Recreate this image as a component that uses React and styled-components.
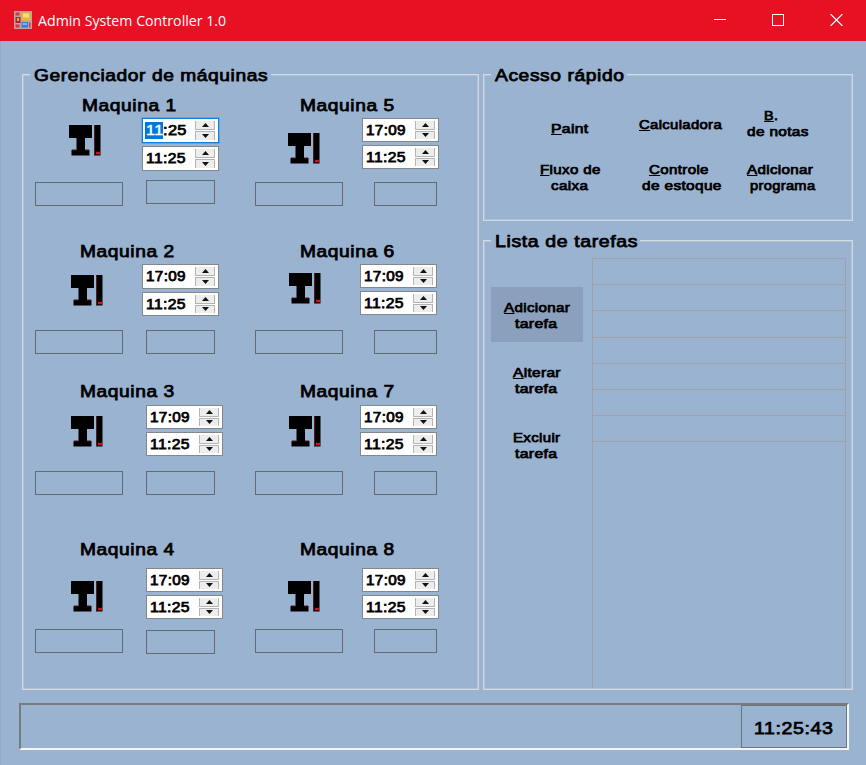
import React, { useLayoutEffect, useRef, useState } from "react";
import styled, { createGlobalStyle, css } from "styled-components";

const BG = "#99b3d1";

const GlobalStyle = createGlobalStyle`
  *, *::before, *::after { box-sizing: border-box; }
  html, body { margin: 0; padding: 0; background: ${BG}; overflow: hidden; }
`;

/* ---------- text stretched to a fixed width ---------- */

const FitBox = styled.span`
  display: block;
  flex: none;
  width: ${(p) => p.$width}px;
  height: ${(p) => p.$line}px;
  line-height: ${(p) => p.$line}px;
  font-size: ${(p) => p.$size}px;
  letter-spacing: ${(p) => p.$track}px;
  margin-left: ${(p) => p.$shift || 0}px;
  white-space: pre;
`;

const FitText = styled.span`
  display: inline-block;
  vertical-align: top;
  transform-origin: 0 50%;
`;

function Fit({ width, size, line, shift, track = 0.5, children }) {
  const ref = useRef(null);
  const [scale, setScale] = useState(1);
  useLayoutEffect(() => {
    setScale(width / (ref.current.offsetWidth - track));
  }, [width, track, children]);
  return (
    <FitBox $width={width} $size={size} $line={line} $shift={shift} $track={track}>
      <FitText ref={ref} style={{ transform: `scaleX(${scale})` }}>
        {children}
      </FitText>
    </FitBox>
  );
}

const Mnemonic = styled.span`
  text-decoration: underline;
  text-decoration-thickness: 1px;
  text-underline-offset: 1px;
  text-decoration-skip-ink: none;
`;

/* ---------- window ---------- */

const Window = styled.div`
  width: 866px;
  height: 765px;
  display: flex;
  flex-direction: column;
  background: ${BG};
  color: #000;
  font-family: "Liberation Sans", Arial, sans-serif;
  -webkit-text-stroke: 0.75px currentColor;
`;

const TitleBar = styled.header`
  height: 41px;
  flex: none;
  display: flex;
  align-items: center;
  padding: 0 0 1px 14px;
  background: #e81123;
  color: #fff;
  font-family: "Open Sans", "Noto Sans", sans-serif;
  -webkit-text-stroke: 0;
`;

const TitleText = styled.div`
  margin-left: 6px;
  flex: 1;
`;

const WindowButtons = styled.div`
  display: flex;
  align-items: center;
  gap: 46px;
  padding-right: 23px;
`;

const Body = styled.main`
  flex: 1;
  display: flex;
  flex-direction: column;
  padding: 33px 13px 0 21px;
  border-left: 1px solid #93abc4;
`;

const Panels = styled.div`
  display: flex;
  gap: 4px;
`;

const SideColumn = styled.div`
  display: flex;
  flex-direction: column;
  gap: 19px;
`;

const GroupBox = styled.section`
  width: ${(p) => p.$width}px;
  height: ${(p) => p.$height}px;
  border: 1px solid #d3dae2;
  outline: 1px solid rgba(205, 214, 224, 0.4);
  outline-offset: -2px;
`;

const Legend = styled.h2`
  position: relative;
  width: max-content;
  margin: -8px 0 0 7px;
  padding: 0 3px 0 4px;
  background: ${BG};
  font-weight: 400;
`;

/* ---------- machines ---------- */

const MachineGrid = styled.div`
  display: grid;
  grid-template-columns: 220px 212px;
  grid-template-rows: 146px 140px 158px 120px;
  margin: 12px 0 0 12px;
`;

const Machine = styled.article`
  display: flex;
  flex-direction: column;
`;

const MachineBody = styled.div`
  display: flex;
  align-items: flex-start;
  height: ${(p) => p.$height}px;
  margin-top: -1px;
`;

const IconSlot = styled.div`
  flex: none;
  width: ${(p) => p.$width}px;
  padding: ${(p) => p.$top}px 0 0 ${(p) => p.$left}px;
`;

const Spinners = styled.div`
  display: flex;
  flex-direction: column;
  gap: 3px;
  padding-top: ${(p) => p.$top}px;
`;

const SpinnerBox = styled.div`
  width: 77px;
  height: ${(p) => (p.$tall ? 25 : 24)}px;
  display: flex;
  justify-content: space-between;
  align-items: stretch;
  padding: 2px 3px 2px 3px;
  background: #fff;
  border: 1px solid #848789;
  ${(p) =>
    p.$active &&
    css`
      border-color: #0f7fdc;
      box-shadow: 0 0 0 0.5px #3d94dd;
    `}
`;

const TimeText = styled.div`
  display: flex;
  align-items: center;
`;

const Selected = styled.span`
  display: block;
  height: 17px;
  margin-left: -1px;
  padding-left: 1px;
  background: #0078d7;
  color: #fff;
  -webkit-text-stroke-width: 0.4px;
`;

const Arrows = styled.div`
  width: 20px;
  display: grid;
  grid-template-rows: 1fr 1fr;
  gap: 1px;
`;

const ArrowButton = styled.div`
  display: flex;
  align-items: center;
  justify-content: center;
  background: #ededed;
  border: solid #b4b4b4;
  border-width: ${(p) => (p.$down ? "1px 1px 0" : "0 1px 1px")};
`;

const StatusRow = styled.div`
  display: flex;
  align-items: flex-start;
`;

const StatusBox = styled.div`
  flex: none;
  width: ${(p) => p.$width}px;
  height: 24px;
  margin: ${(p) => p.$top || 0}px 0 0 ${(p) => p.$left || 0}px;
  border: 1px solid #626a74;
`;

/* ---------- quick access ---------- */

const QuickGrid = styled.div`
  display: grid;
  grid-template-columns: 100px 103px 90px;
  grid-template-rows: 54px 40px;
  margin: 23px 0 0 50px;
`;

const TextButton = styled.button`
  appearance: none;
  border: 0;
  padding: 0;
  background: none;
  color: inherit;
  font: inherit;
  text-align: left;
  display: flex;
  flex-direction: column;
  align-items: flex-start;
  margin: ${(p) => p.$top || 0}px 0 0 ${(p) => p.$left || 0}px;
`;

/* ---------- tasks ---------- */

const TaskArea = styled.div`
  display: flex;
  margin-top: 7px;
`;

const TaskActions = styled.div`
  width: 108px;
  padding: 29px 0 0 7px;
  display: flex;
  flex-direction: column;
  gap: 10px;
`;

const TaskButton = styled(TextButton)`
  width: 92px;
  height: 55px;
  padding: 13px 0 0 13px;
  background: ${(p) => (p.$active ? "#8ba0bd" : "transparent")};
`;

const TaskList = styled.div`
  width: 254px;
  height: 430px;
  border: solid #a0a1a4;
  border-width: 1px 1px 0;
`;

const TaskRow = styled.div`
  height: 26.2px;
  border-bottom: 1px solid #a0a1a4;
`;

/* ---------- status bar ---------- */

const StatusBar = styled.footer`
  display: flex;
  justify-content: flex-end;
  width: 830px;
  height: 47px;
  margin: 13px 0 0 -3px;
  border-style: solid;
  border-width: 2px;
  border-color: #777b80 #f4f7fa #f4f7fa #777b80;
`;

const Clock = styled.div`
  width: 106px;
  height: 43px;
  padding: 13px 0 0 12px;
  border: 1px solid #6d747d;
`;

/* ---------- drawings ---------- */

const AppIcon = () => (
  <svg width="18" height="18" viewBox="0 0 18 18">
    <rect width="18" height="18" fill="#b9a3a5" />
    <rect x="1.5" y="1.5" width="4" height="3" fill="#e03242" />
    <rect x="1.5" y="6" width="5" height="6" fill="#a82a20" />
    <rect x="3" y="7" width="2" height="3" fill="#e4a28e" />
    <rect x="1.5" y="13.5" width="4" height="3" fill="#e03242" />
    <rect x="7.5" y="1.5" width="9" height="8" fill="#e9b52c" />
    <rect x="9" y="2.5" width="6" height="4" fill="#f9dc75" />
    <rect x="7.5" y="11" width="6.5" height="5.5" fill="#397bdc" />
    <rect x="8.5" y="12" width="4.5" height="2" fill="#82b2f2" />
    <rect x="15" y="11.5" width="1.5" height="5" fill="#e03242" />
  </svg>
);

const MachineIcon = () => (
  <svg width="32" height="31" viewBox="0 0 32 31" display="block">
    <path d="M0 0H23V13H16V25H20.5V30.5H2.5V25H7.5V13H0Z" fill="#000" />
    <path d="M3 25H7.5M16 25H20" stroke="#5a1118" strokeWidth="1" />
    <rect x="25" y="0" width="6.5" height="30.5" fill="#000" />
    <path d="M25.5 0V30" stroke="#571820" strokeWidth="1" />
    <path d="M27 26.2l1 .8h2l1-.8v3h-4z" fill="#d3101c" />
  </svg>
);

const Triangle = ({ down }) => (
  <svg width="7" height="4" viewBox="0 0 7 4" display="block">
    <path d={down ? "M0 0H7L3.5 4Z" : "M0 4H7L3.5 0Z"} fill="#111" />
  </svg>
);

/* ---------- data ---------- */

const machines = [
  { id: 1, title: 48, icon: [34, 11], spin: [107, 4], body: 68, box: [23, 69, -2], first: "11:25", active: true, tall: true, tall2: true },
  { id: 5, title: 46, icon: [33, 19], spin: [107, 4], body: 68, box: [31, 63, 0] },
  { id: 2, title: 46, icon: [36, 15], spin: [107, 4], body: 70, box: [23, 69, 0], tall: true },
  { id: 6, title: 46, icon: [34, 13], spin: [105, 4], body: 70, box: [31, 63, 0] },
  { id: 3, title: 46, icon: [36, 16], spin: [111, 5], body: 71, box: [23, 69, 0] },
  { id: 7, title: 46, icon: [34, 16], spin: [105, 5], body: 71, box: [31, 63, 0] },
  { id: 4, title: 46, icon: [36, 23], spin: [111, 10], body: 71, box: [23, 69, 1] },
  { id: 8, title: 46, icon: [33, 23], spin: [107, 10], body: 71, box: [31, 63, 0] },
];

const quick = [
  { at: [17, 13], lines: [["P", "aint", 37, 0]] },
  { at: [5, 9], lines: [["C", "alculadora", 83, 0]] },
  { at: [10, 0], lines: [["B", ".", 14, 17], ["", "de notas", 61, 0]] },
  { at: [6, 0], lines: [["F", "luxo de", 60, 0], ["", "caixa", 37, 11]] },
  { at: [7, 0], lines: [["C", "ontrole", 60, 8], ["", "de estoque", 79, 1]] },
  { at: [10, 0], lines: [["A", "dicionar", 66, 0], ["", "programa", 65, 3]] },
];

const tasks = [
  { active: true, lines: [["A", "dicionar", 66, 0], ["", "tarefa", 42, 11]] },
  { lines: [["A", "lterar", 47, 9], ["", "tarefa", 42, 11]] },
  { lines: [["", "Excluir", 47, 9], ["", "tarefa", 42, 11]] },
];

/* ---------- pieces ---------- */

const Lines = ({ lines }) =>
  lines.map(([key, rest, width, shift]) => (
    <Fit key={rest} width={width} size={13} line={16} shift={shift} track={0.3}>
      {key && <Mnemonic>{key}</Mnemonic>}
      {rest}
    </Fit>
  ));

const Spinner = ({ value, active, tall }) => (
  <SpinnerBox $active={active} $tall={tall}>
    <TimeText>
      {active ? (
        <>
          <Selected>
            <Fit width={17} size={14} line={17} track={0.3}>{value.slice(0, 2)}</Fit>
          </Selected>
          <Fit width={23} size={14} line={17} track={0.3}>{value.slice(2)}</Fit>
        </>
      ) : (
        <Fit width={40} size={14} line={17} track={0.3}>{value}</Fit>
      )}
    </TimeText>
    <Arrows>
      <ArrowButton><Triangle /></ArrowButton>
      <ArrowButton $down><Triangle down /></ArrowButton>
    </Arrows>
  </SpinnerBox>
);

const MachineCard = ({ m }) => (
  <Machine>
    <Fit width={94} size={16} line={18} shift={m.title - 1}>{`Maquina ${m.id}`}</Fit>
    <MachineBody $height={m.body}>
      <IconSlot $width={m.spin[0]} $left={m.icon[0]} $top={m.icon[1]}>
        <MachineIcon />
      </IconSlot>
      <Spinners $top={m.spin[1]}>
        <Spinner value={m.first || "17:09"} active={m.active} tall={m.tall} />
        <Spinner value="11:25" tall={m.tall2} />
      </Spinners>
    </MachineBody>
    <StatusRow>
      <StatusBox $width={88} />
      <StatusBox $left={m.box[0]} $width={m.box[1]} $top={m.box[2]} />
    </StatusRow>
  </Machine>
);

export default function App() {
  return (
    <>
      <GlobalStyle />
      <Window>
        <TitleBar>
          <AppIcon />
          <TitleText>
            <Fit width={188} size={15} line={20} track={0}>Admin System Controller 1.0</Fit>
          </TitleText>
          <WindowButtons>
            <svg width="12" height="12"><path d="M0 5.5H12" stroke="#fff" /></svg>
            <svg width="12" height="12"><rect x=".5" y=".5" width="11" height="11" fill="none" stroke="#fff" /></svg>
            <svg width="13" height="12"><path d="M.5 0L12.5 12M12.5 0L.5 12" stroke="#fff" strokeWidth="1.2" /></svg>
          </WindowButtons>
        </TitleBar>
        <Body>
          <Panels>
            <GroupBox $width={457} $height={616}>
              <Legend><Fit width={234} size={16} line={18}>Gerenciador de máquinas</Fit></Legend>
              <MachineGrid>
                {machines.map((m) => <MachineCard key={m.id} m={m} />)}
              </MachineGrid>
            </GroupBox>
            <SideColumn>
              <GroupBox $width={370} $height={147}>
                <Legend><Fit width={129} size={16} line={18}>Acesso rápido</Fit></Legend>
                <QuickGrid>
                  {quick.map((q, i) => (
                    <TextButton key={i} $left={q.at[0]} $top={q.at[1]}>
                      <Lines lines={q.lines} />
                    </TextButton>
                  ))}
                </QuickGrid>
              </GroupBox>
              <GroupBox $width={370} $height={450}>
                <Legend><Fit width={142} size={16} line={18}>Lista de tarefas</Fit></Legend>
                <TaskArea>
                  <TaskActions>
                    {tasks.map((t, i) => (
                      <TaskButton key={i} $active={t.active}><Lines lines={t.lines} /></TaskButton>
                    ))}
                  </TaskActions>
                  <TaskList>
                    {Array.from({ length: 7 }, (_, i) => <TaskRow key={i} />)}
                  </TaskList>
                </TaskArea>
              </GroupBox>
            </SideColumn>
          </Panels>
          <StatusBar>
            <Clock><Fit width={79} size={17} line={20}>11:25:43</Fit></Clock>
          </StatusBar>
        </Body>
      </Window>
    </>
  );
}
